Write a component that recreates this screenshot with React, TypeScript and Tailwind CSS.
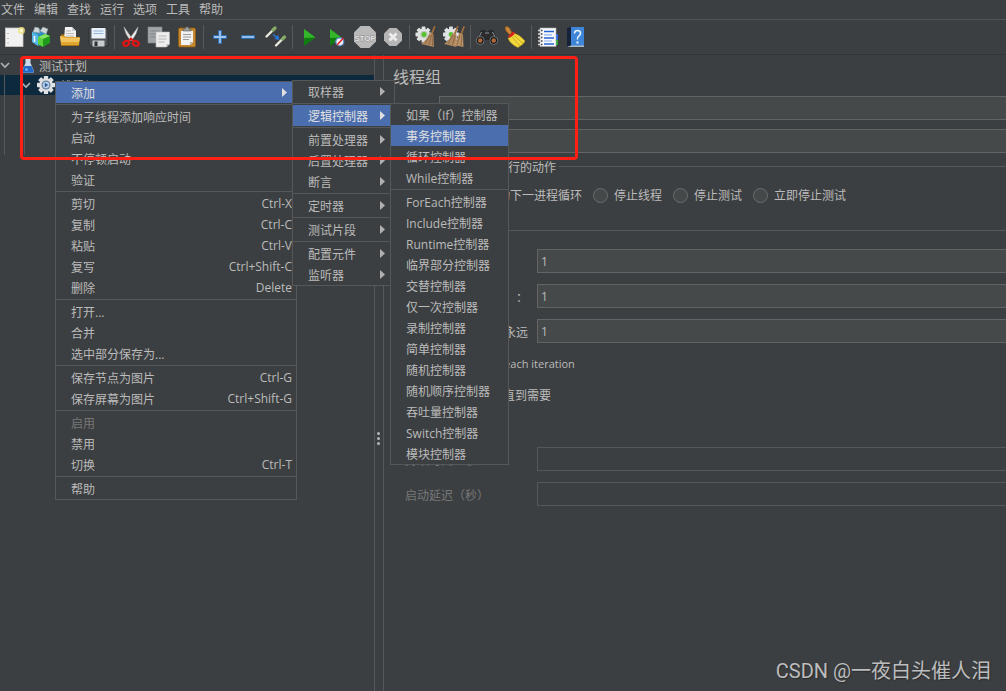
import React from "react";

type IconProps = { children: React.ReactNode };

function Glyph({ children }: IconProps) {
  return (
    <svg width="24" height="24" viewBox="0 0 24 24" fill="none" aria-hidden="true">
      {children}
    </svg>
  );
}

function GearShape({ cx, cy, r }: { cx: number; cy: number; r: number }) {
  return (
    <g>
      {[0, 45, 90, 135].map((a) => (
        <rect
          key={a}
          x={cx - r * 0.24}
          y={cy - r}
          width={r * 0.48}
          height={r * 2}
          rx="0.6"
          fill="#dfe1e3"
          transform={`rotate(${a} ${cx} ${cy})`}
        />
      ))}
      <circle cx={cx} cy={cy} r={r * 0.76} fill="#dfe1e3" />
    </g>
  );
}

const icons: Record<string, React.ReactNode> = {
  new: (
    <Glyph>
      <rect x="3.500" y="3" width="17.500" height="18.500" fill="#f1f1f1" stroke="#c9c9c9" strokeWidth="0.8" />
      <path d="M6 8v1M6 13v1M6 17.500v1" stroke="#8d8d8d" />
      <circle cx="19.500" cy="5.500" r="3.500" fill="#efe27a" opacity="0.8" />
      <circle cx="19.500" cy="5.500" r="1.500" fill="#fffce0" />
    </Glyph>
  ),
  templates: (
    <Glyph>
      <path d="M2 7l6-3 9 2v11l-8 4-7-4z" fill="#2b8fc6" />
      <path d="M2 7l6 3v11l-6-4z" fill="#57b7e4" />
      <path d="M3 7l2-5 4 1 1 5zM10 6l3-4 5 2-2 5z" fill="#cfd6da" stroke="#8e979c" strokeWidth="0.6" />
      <path d="M8 12l7-3 5 2v7l-7 4-5-3z" fill="#1f9a1c" />
      <path d="M8 12l5 2v8l-5-3z" fill="#59d23c" />
      <path d="M8 12l7-3 5 2-7 3z" fill="#86e55f" />
      <path d="M4.500 11v6" stroke="#fff" strokeWidth="1.400" />
    </Glyph>
  ),
  open: (
    <Glyph>
      <path d="M3 12V9.500h4l1 2.500z" fill="#b27a14" />
      <path d="M7 2h7l4 4v9H6z" fill="#f2f2f2" />
      <path d="M14 2v4h4" fill="#cfcfcf" />
      <path d="M8 6h5M8 8.500h8M8 11h8" stroke="#a9a9a9" strokeWidth="0.8" />
      <path d="M2 11h5l1 1h13q1 0 1 1l-1 7q0 1-1 1H4q-1 0-1-1z" fill="#dfa52f" />
      <path d="M2 11l5 2h15l-1 4H3z" fill="#f1c561" />
      <path d="M3 20.500h18" stroke="#a87312" />
    </Glyph>
  ),
  save: (
    <Glyph>
      <path d="M3 3h17l2 2v16H5l-2-2z" fill="#4f5256" stroke="#2a2c2f" strokeWidth="0.8" />
      <rect x="5.500" y="3" width="14" height="10.500" fill="#eaf1f8" />
      <path d="M7.500 6h10M7.500 8.500h10" stroke="#8eb4d8" />
      <rect x="6.500" y="15.500" width="12" height="6" fill="#c9ccce" />
      <rect x="8.500" y="16.500" width="3" height="4.500" fill="#2e3033" />
    </Glyph>
  ),
  cut: (
    <Glyph>
      <path d="M5 2l8.500 12-2 1.500Q6 9 5 2z" fill="#e4e4e4" stroke="#aaa" strokeWidth="0.5" />
      <path d="M19 2l-8.500 12 2 1.500Q18 9 19 2z" fill="#f4f4f4" stroke="#aaa" strokeWidth="0.5" />
      <ellipse cx="7.200" cy="18.400" rx="3" ry="2.300" transform="rotate(-25 7.200 18.400)" stroke="#e01414" strokeWidth="2.200" />
      <ellipse cx="16.800" cy="18.400" rx="3" ry="2.300" transform="rotate(25 16.800 18.400)" stroke="#e01414" strokeWidth="2.200" />
      <path d="M9.500 16l2.500-2.500 2.500 2.500" stroke="#e11c1c" strokeWidth="1.800" />
    </Glyph>
  ),
  copy: (
    <Glyph>
      <path d="M1 2h14v16H1z" fill="#a2a5a7" stroke="#85888a" strokeWidth="0.6" />
      <path d="M3.500 6h9M3.500 9h9M3.500 12h9" stroke="#838688" />
      <path d="M9 7h13.500v12l-3 3H9z" fill="#ededed" stroke="#bcbcbc" strokeWidth="0.6" />
      <path d="M11.500 11h8M11.500 14h8M11.500 17h6" stroke="#b4b4b4" />
      <path d="M22.500 19h-3v3z" fill="#b7b7b7" />
    </Glyph>
  ),
  paste: (
    <Glyph>
      <rect x="3.500" y="3" width="17" height="19" rx="1.500" fill="#c78a31" stroke="#8c5a13" strokeWidth="0.8" />
      <path d="M6 6h12v11l-3 3H6z" fill="#f2f2f2" />
      <path d="M8 9.500h8M8 12h8M8 14.500h6" stroke="#9c9c9c" />
      <path d="M8 6V4h2l1-2h2l1 2h2v2z" fill="#9b9d9f" stroke="#595b5d" strokeWidth="0.6" />
      <path d="M18 17h-3v3z" fill="#b5b5b5" />
    </Glyph>
  ),
  plus: (
    <Glyph>
      <path d="M12 5v14M5 12h14" stroke="#2f6cae" strokeWidth="4" />
      <path d="M12 6v12M6 12h12" stroke="#9cc6ee" strokeWidth="1.800" />
    </Glyph>
  ),
  minus: (
    <Glyph>
      <path d="M5 12h14" stroke="#2f6cae" strokeWidth="4" />
      <path d="M6 12h12" stroke="#9cc6ee" strokeWidth="1.800" />
    </Glyph>
  ),
  toggle: (
    <Glyph>
      <path d="M2.500 11.500l7-7" stroke="#e9e9e0" strokeWidth="2.400" strokeLinecap="round" />
      <path d="M9 5l2-2" stroke="#86ad68" strokeWidth="3.200" strokeLinecap="round" />
      <path d="M12 20.500l7-7" stroke="#e9e9e0" strokeWidth="2.400" strokeLinecap="round" />
      <path d="M18.500 14l2-2" stroke="#86ad68" strokeWidth="3.200" strokeLinecap="round" />
      <path d="M9 9.500l4 3" stroke="#2879e2" strokeWidth="1.300" />
      <path d="M15.500 15l-5-1 3.500-4z" fill="#2879e2" />
    </Glyph>
  ),
  start: (
    <Glyph>
      <path d="M7 4l11.500 8.500L7 21z" fill="#0f7d10" />
      <path d="M7 4l11.500 8.500L7 13z" fill="#35b52b" />
    </Glyph>
  ),
  startNoPause: (
    <Glyph>
      <path d="M5 4l11.500 8.500L5 21z" fill="#0f7d10" />
      <path d="M5 4l11.500 8.500L5 13z" fill="#35b52b" />
      <circle cx="14.800" cy="16.800" r="4" fill="#eef1f6" stroke="#5787c7" strokeWidth="1.200" />
      <path d="M12 20l6.500-7" stroke="#df2222" strokeWidth="1.500" />
    </Glyph>
  ),
  stop: (
    <Glyph>
      <path d="M7.500 1h9L23 7.500v9L16.500 23h-9L1 16.500v-9z" fill="#b9b9b9" />
      <text x="12" y="15.500" textAnchor="middle" fontSize="8" fontWeight="700" fontFamily="Liberation Sans" fill="#e2e2e2" stroke="#8f8f8f" strokeWidth="0.900" paintOrder="stroke">
        STOP
      </text>
    </Glyph>
  ),
  shutdown: (
    <Glyph>
      <path d="M8.500 3h7L21 8.500v7L15.500 21h-7L3 15.500v-7z" fill="#b5b5b5" />
      <path d="M8.500 8.500l7 7M15.500 8.500l-7 7" stroke="#ececec" strokeWidth="2.800" />
    </Glyph>
  ),
  clear: (
    <Glyph>
      <GearShape cx={9.5} cy={9.500} r={8} />
      <circle cx="10" cy="9.500" r="3.600" fill="#b5c9ae" />
      <circle cx="10" cy="9.500" r="2.400" fill="#57c32f" />
      <path d="M20 1l1.500.5-3 8-1.800-.6z" fill="#a06f3c" />
      <path d="M15.500 8l4 1.500.5 12.500-13-3q6-4 8.500-11z" fill="#b08a62" />
      <path d="M16 10l-5 9M17.500 10l-2.500 10M19 10l-.5 11" stroke="#7d5833" strokeWidth="0.700" />
    </Glyph>
  ),
  clearAll: (
    <Glyph>
      <GearShape cx={9} cy={9.500} r={8} />
      <circle cx="9" cy="9.500" r="2.400" fill="#57c32f" />
      <path d="M15 1l1.500.5-3 8-1.800-.6zM21.500 1l1.500.5-3 8-1.800-.6z" fill="#a06f3c" />
      <path d="M10.500 8l4 1.500V22L2 19q6-4 8.500-11z" fill="#b08a62" />
      <path d="M17 8l4 1.500.5 12.500-10-2q4-5 5.500-12z" fill="#ba9269" />
      <path d="M11 10L6 19M13 10l-2.500 10M18 10l-3 10M20 10l-1 11" stroke="#7d5833" strokeWidth="0.700" />
    </Glyph>
  ),
  search: (
    <Glyph>
      <path d="M6 6l3-1 2 2h2l2-2 3 1 4 9-5 4-4-5h-2l-4 5-5-4z" fill="#292b2d" stroke="#15171a" strokeWidth="0.600" />
      <path d="M6.500 7l-3 6M17.500 7l3 6M10 8h4" stroke="#92979b" strokeWidth="1" />
      <circle cx="5.200" cy="15.500" r="4" fill="#17191b" stroke="#777b7f" strokeWidth="0.900" />
      <circle cx="18.800" cy="15.500" r="4" fill="#17191b" stroke="#777b7f" strokeWidth="0.900" />
      <circle cx="5.200" cy="15.500" r="2.200" fill="#b0683a" />
      <circle cx="18.800" cy="15.500" r="2.200" fill="#b0683a" />
    </Glyph>
  ),
  reset: (
    <Glyph>
      <path d="M2 2.500q2-2 4.500.5L9 8 6.500 9.500Q2 6 2 2.500z" fill="#c98636" stroke="#8b5515" strokeWidth="0.600" />
      <path d="M10 8q6 1 12 8-1 3-7 6.500Q7 19 5 13q4-1 5-5z" fill="#f0d83d" stroke="#b79812" strokeWidth="0.600" />
      <path d="M9 12l8 9M11 10.500l9 8" stroke="#c9aa1f" />
      <path d="M5.500 11.500Q9 11 11 7" stroke="#d5221b" strokeWidth="2.600" />
    </Glyph>
  ),
  functions: (
    <Glyph>
      <path d="M19 9h3v6h-3z" fill="#2865e0" />
      <path d="M19 15h3v5h-3z" fill="#2da92f" />
      <rect x="4" y="3" width="16" height="18.500" fill="#f7f9fb" stroke="#a8abad" strokeWidth="0.600" />
      <path d="M8 6.500h10M8 13h10M8 19h10" stroke="#2463d6" strokeWidth="1.500" />
      <path d="M8 9.800h8M8 16h8" stroke="#8eb1ec" strokeWidth="1.200" />
      <path d="M2 5.500h4M2 9h4M2 12.500h4M2 16h4M2 19.500h4" stroke="#d6d6d6" strokeWidth="1.500" />
      <path d="M5 5.500h1.500M5 9h1.500M5 12.500h1.500M5 16h1.500M5 19.500h1.500" stroke="#44474a" strokeWidth="1.500" />
    </Glyph>
  ),
  help: (
    <Glyph>
      <path d="M3 3l4-1v19l-4 1z" fill="#15223a" />
      <path d="M7 2h13v19H7z" fill="#3e85d8" />
      <path d="M3 22l4-1.500h13V22z" fill="#aeb8c2" />
      <path d="M10.500 8.500q0-3 3-3t3 2.800q0 1.800-1.700 2.900T13.500 14.500" stroke="#eff6ff" strokeWidth="1.500" />
      <rect x="12.500" y="16.500" width="2" height="2" fill="#eff6ff" />
    </Glyph>
  ),
};

const toolbar: { id: string; label: string }[][] = [
  [
    { id: "new", label: "新建" },
    { id: "templates", label: "模板" },
    { id: "open", label: "打开" },
    { id: "save", label: "保存" },
  ],
  [
    { id: "cut", label: "剪切" },
    { id: "copy", label: "复制" },
    { id: "paste", label: "粘贴" },
  ],
  [
    { id: "plus", label: "全部展开" },
    { id: "minus", label: "全部折叠" },
    { id: "toggle", label: "切换" },
  ],
  [
    { id: "start", label: "启动" },
    { id: "startNoPause", label: "不停顿启动" },
    { id: "stop", label: "停止" },
    { id: "shutdown", label: "关闭" },
  ],
  [
    { id: "clear", label: "清除" },
    { id: "clearAll", label: "清除全部" },
  ],
  [
    { id: "search", label: "查找" },
    { id: "reset", label: "重置查找" },
  ],
  [
    { id: "functions", label: "函数助手" },
    { id: "help", label: "帮助" },
  ],
];

type Item = { label: string; keys?: string; sub?: boolean; active?: boolean; disabled?: boolean };

const contextMenu: Item[][] = [
  [{ label: "添加", sub: true, active: true }],
  [{ label: "为子线程添加响应时间" }, { label: "启动" }, { label: "不停顿启动" }, { label: "验证" }],
  [
    { label: "剪切", keys: "Ctrl-X" },
    { label: "复制", keys: "Ctrl-C" },
    { label: "粘贴", keys: "Ctrl-V" },
    { label: "复写", keys: "Ctrl+Shift-C" },
    { label: "删除", keys: "Delete" },
  ],
  [{ label: "打开..." }, { label: "合并" }, { label: "选中部分保存为..." }],
  [
    { label: "保存节点为图片", keys: "Ctrl-G" },
    { label: "保存屏幕为图片", keys: "Ctrl+Shift-G" },
  ],
  [{ label: "启用", disabled: true }, { label: "禁用" }, { label: "切换", keys: "Ctrl-T" }],
  [{ label: "帮助" }],
];

const addMenu: Item[][] = [
  [{ label: "取样器", sub: true }],
  [{ label: "逻辑控制器", sub: true, active: true }],
  [
    { label: "前置处理器", sub: true },
    { label: "后置处理器", sub: true },
    { label: "断言", sub: true },
  ],
  [{ label: "定时器", sub: true }],
  [{ label: "测试片段", sub: true }],
  [
    { label: "配置元件", sub: true },
    { label: "监听器", sub: true },
  ],
];

const controllerMenu: Item[][] = [
  [{ label: "如果（If）控制器" }, { label: "事务控制器", active: true }, { label: "循环控制器" }, { label: "While控制器" }],
  [
    { label: "ForEach控制器" },
    { label: "Include控制器" },
    { label: "Runtime控制器" },
    { label: "临界部分控制器" },
    { label: "交替控制器" },
    { label: "仅一次控制器" },
    { label: "录制控制器" },
    { label: "简单控制器" },
    { label: "随机控制器" },
    { label: "随机顺序控制器" },
    { label: "吞吐量控制器" },
    { label: "Switch控制器" },
    { label: "模块控制器" },
  ],
];

function Menu({ groups, place }: { groups: Item[][]; place: string }) {
  return (
    <div role="menu" className={`absolute border border-[#555759] bg-[#3c3f41] ${place}`}>
      {groups.map((group, g) => (
        <div key={g}>
          {g > 0 && (
            <div role="separator" className="h-[3px] py-px">
              <div className="h-px bg-[#555759]" />
            </div>
          )}
          {group.map((item) => (
            <button
              key={item.label}
              role="menuitem"
              disabled={item.disabled}
              className={`flex h-[21px] w-full items-center justify-between whitespace-nowrap pl-[15px] pr-1 ${
                item.active ? "bg-[#4b6eaf] text-[#e0e0e0]" : item.disabled ? "text-[#777777]" : ""
              }`}
            >
              <span className="pt-0.5">{item.label}</span>
              {item.keys && <span>{item.keys}</span>}
              {item.sub && (
                <svg className="mr-[5px]" width="5" height="9" viewBox="0 0 5 9" aria-hidden="true">
                  <path d="M0 0l5 4.500L0 9z" fill={item.active ? "#e0e0e0" : "#b0b0b0"} />
                </svg>
              )}
            </button>
          ))}
        </div>
      ))}
    </div>
  );
}

function Chevron() {
  return (
    <svg width="10" height="8" viewBox="0 0 10 8" fill="none" aria-hidden="true">
      <path d="M1 2l4 4 4-4" stroke="#b0b3b5" strokeWidth="1.600" />
    </svg>
  );
}

const fieldClass = "h-6 min-w-0 flex-1 border border-r-0 border-[#646464] bg-[#45494a] px-[3px] text-[#bbbbbb] outline-none";
const radioClass = "size-[15px] appearance-none rounded-full border border-[#6b6d6e] bg-[#45494a]";
const checkClass = "size-[15px] appearance-none rounded-sm border border-[#6b6d6e] bg-[#45494a]";

function Group({ title, children }: { title: string; children: React.ReactNode }) {
  return (
    <fieldset className="min-w-0">
      <legend className="flex h-[21px] w-full items-center gap-[3px] pl-4">
        <span className="pt-0.5">{title}</span>
        <span className="h-px flex-1 bg-[#555759]" />
      </legend>
      {children}
    </fieldset>
  );
}

export default function App() {
  return (
    <div className="relative flex min-h-screen flex-col overflow-hidden bg-[#3c3f41] font-['Open_Sans','Noto_Sans_CJK_SC',sans-serif] text-[12px] leading-[18px] text-[#bbbbbb]">
      <nav className="flex h-5 items-center gap-[9px] border-b border-[#515355] pl-px pt-px">
        {["文件", "编辑", "查找", "运行", "选项", "工具", "帮助"].map((m) => (
          <button key={m}>{m}</button>
        ))}
      </nav>

      <div role="toolbar" className="flex h-[35px] items-center border-b border-[#323435]">
        {toolbar.map((group, g) => (
          <React.Fragment key={g}>
            {g > 0 && (
              <div className="flex w-[5px] justify-center">
                <div className="h-6 w-px bg-[#57595b]" />
              </div>
            )}
            {group.map((b) => (
              <button key={b.id} aria-label={b.label} className="flex w-7 items-center justify-center">
                {icons[b.id]}
              </button>
            ))}
          </React.Fragment>
        ))}
      </div>

      <div className="flex flex-1">
        <aside className="w-[375px] shrink-0 border-r border-[#555759]">
          <ul role="tree">
            <li role="treeitem" aria-expanded="true">
              <div className="flex h-5 items-center">
                <Chevron />
                <svg className="ml-3 mr-[5px]" width="12" height="18" viewBox="0 0 12 18" aria-hidden="true">
                  <path d="M3.500 1h5v6l3.500 8q0 2-1.500 2h-9Q0 17 0 15l3.500-8z" fill="#c8d8e8" />
                  <path d="M2.500 10h7l2.300 5q0 1.700-1.300 1.700h-9Q.2 16.700.2 15z" fill="#2268c4" />
                  <path d="M3 1h6" stroke="#f2f5f8" strokeWidth="1.500" />
                  <circle cx="4.500" cy="13.500" r="1.300" fill="#74b4f4" />
                </svg>
                <span className="pt-1">测试计划</span>
              </div>
              <ul role="group" className="flex h-20 flex-col">
                <li role="treeitem" aria-selected="true" className="flex h-5 shrink-0 items-center bg-[#0d293e]">
                  <span className="ml-1 mr-4 h-5 w-px bg-[#555759]" />
                  <Chevron />
                  <svg className="ml-[5px] mr-1" width="20" height="20" viewBox="0 0 20 20" aria-hidden="true">
                    <GearShape cx={10} cy={10} r={9} />
                    <circle cx="10" cy="10" r="4.500" fill="#6c87a6" />
                    <circle cx="10" cy="10" r="3.200" fill="#b9cfe8" />
                    <path d="M8.800 7.800l3.400 2.200-3.400 2.200z" fill="#2c5c9c" />
                  </svg>
                  <span className="pt-1">线程组</span>
                </li>
                <li aria-hidden="true" className="ml-1 flex flex-1 border-l border-[#555759] pl-[19px]">
                  <span className="w-px bg-[#555759]" />
                </li>
              </ul>
            </li>
          </ul>
        </aside>

        <div className="flex w-2 shrink-0 flex-col items-start justify-center gap-0.5 pl-0.5 pt-[131px]">
          <span className="size-[3px] rounded-full bg-[#b5b7b8]" />
          <span className="size-[3px] rounded-full bg-[#b5b7b8]" />
          <span className="size-[3px] rounded-full bg-[#b5b7b8]" />
        </div>

        <main className="min-w-0 flex-1 border-l border-[#555759] pt-2.5">
          <h1 className="pl-[9px] text-[16px] leading-6">线程组</h1>
          <div className="mt-[7px] flex flex-col gap-[9px] pl-4">
            <label className="flex items-center">
              <span className="w-[39px] pt-1">名称：</span>
              <input className={fieldClass} />
            </label>
            <label className="flex items-center">
              <span className="w-[39px] pt-1">注释：</span>
              <input className={fieldClass} />
            </label>
          </div>

          <div className="mt-[3px] flex flex-col gap-[15px]">
            <Group title="在取样器错误后要执行的动作">
              <div className="mt-2 flex h-5 items-center gap-[11px] pl-[25px]">
                {["继续", "启动下一进程循环", "停止线程", "停止测试", "立即停止测试"].map((r) => (
                  <label key={r} className="flex items-center gap-1.5 whitespace-nowrap">
                    <input type="radio" name="onError" className={radioClass} />
                    <span className="pt-0.5">{r}</span>
                  </label>
                ))}
              </div>
            </Group>

            <Group title="线程属性">
              <div className="mt-2 flex flex-col gap-[11px] pl-[21px]">
                <label className="flex items-center">
                  <span className="w-[132px] pt-1">线程数：</span>
                  <input className={fieldClass} defaultValue="1" />
                </label>
                <label className="flex items-center">
                  <span className="flex w-[132px] justify-between whitespace-nowrap pr-[9px] pt-1">
                    <span>
                      <span className="text-[11px]">Ramp-Up</span>时间（秒）
                    </span>
                    <span>：</span>
                  </span>
                  <input className={fieldClass} defaultValue="1" />
                </label>
                <div className="flex items-center">
                  <div className="flex w-[132px] items-center justify-between pr-[9px]">
                    <label htmlFor="loops" className="pt-1">
                      循环次数
                    </label>
                    <label className="flex items-center gap-1.5">
                      <input type="checkbox" className={checkClass} />
                      <span className="pt-1">永远</span>
                    </label>
                  </div>
                  <input id="loops" className={fieldClass} defaultValue="1" />
                </div>
                <label className="flex h-5 items-center gap-1.5 pl-[5px]">
                  <input type="checkbox" className={checkClass} />
                  <span className="text-[11px]">Same user on each iteration</span>
                </label>
                {["延迟创建线程直到需要", "调度器"].map((c) => (
                  <label key={c} className="flex h-5 items-center gap-1.5 pl-[5px]">
                    <input type="checkbox" className={checkClass} />
                    <span className="pt-0.5">{c}</span>
                  </label>
                ))}
                {["持续时间（秒）", "启动延迟（秒）"].map((d) => (
                  <label key={d} className="flex items-center text-[#777777]">
                    <span className="w-[132px] pt-1">{d}</span>
                    <input disabled className="h-6 min-w-0 flex-1 border border-r-0 border-[#555759] bg-[#3c3f41] px-[3px]" />
                  </label>
                ))}
              </div>
            </Group>
          </div>
        </main>
      </div>

      <Menu groups={contextMenu} place="left-[55px] top-[81px] w-[242px]" />
      <Menu groups={addMenu} place="left-[292px] top-[80px] w-[103px]" />
      <Menu groups={controllerMenu} place="left-[390px] top-[103px] w-[119px]" />

      <div className="pointer-events-none absolute left-5 top-14 h-[104px] w-[558px] rounded-sm border-3 border-[#ff1f14]" />
      <p className="absolute bottom-1.5 right-[15px] font-['Roboto','Noto_Sans_CJK_SC',sans-serif] text-[20px] leading-7 text-[#bcbdbe] [text-shadow:1px_1px_1px_#2a2c2d]">
        CSDN @一夜白头催人泪
      </p>
    </div>
  );
}
